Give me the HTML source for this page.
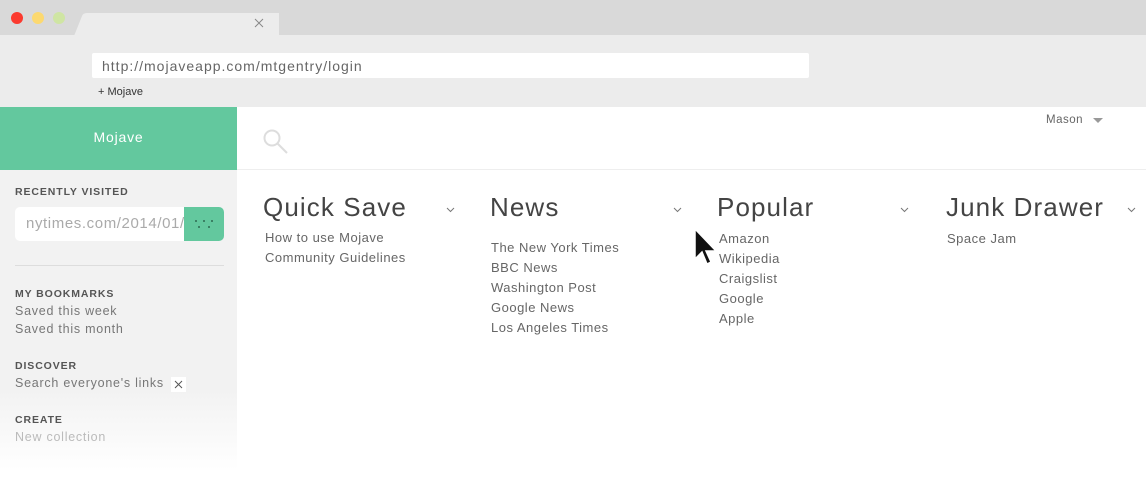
<!DOCTYPE html>
<html><head><style>
body{margin:0;width:1146px;height:484px;overflow:hidden;background:#fff;font-family:"Liberation Sans",sans-serif;position:relative}
.a{position:absolute}
.top{left:0;top:0;width:1146px;height:35px;background:#d9d9d9}
.bar{left:0;top:35px;width:1146px;height:72px;background:#ececec}
.url{left:92px;top:53px;width:717px;height:25px;background:#fff;border-radius:2px;font-size:14px;color:#666;line-height:26px;padding-left:10px;box-sizing:border-box;letter-spacing:1px}
.side{left:0;top:170px;width:237px;height:314px;background:linear-gradient(#f2f2f2 0,#f2f2f2 220px,#fff 300px)}
.green{left:0;top:107px;width:237px;height:63px;background:#63c89e;color:#fff;font-size:14px;text-align:center;line-height:60px;letter-spacing:.8px}
.h{font-size:10.5px;font-weight:bold;color:#555;letter-spacing:.9px}
.s{font-size:12.5px;color:#777;letter-spacing:.75px}
.t{font-size:26px;color:#444;letter-spacing:1.1px}
.l{font-size:13px;color:#666;line-height:20px;letter-spacing:.5px}
</style></head><body>
<div class="a top"></div>
<div class="a" style="left:11px;top:12px;width:12px;height:12px;border-radius:6px;background:#fb3a2f"></div>
<div class="a" style="left:32px;top:12px;width:12px;height:12px;border-radius:6px;background:#fcd970"></div>
<div class="a" style="left:53px;top:12px;width:12px;height:12px;border-radius:6px;background:#cfe5a3"></div>
<svg class="a" style="left:74px;top:12px" width="205" height="24"><path d="M4 24 L11 4 Q12 1 16 1 L262 1 Q266 1 267 4 L274 24 Z" transform="translate(-74 0) translate(74 0)" fill="#ececec"/></svg>
<svg class="a" style="left:74px;top:12px" width="205" height="24"><path d="M0 24 L8 4 Q9 1 13 1 L190 1 Q194 1 195 4 L203 24 Z" fill="#ececec"/></svg>
<svg class="a" style="left:254px;top:18px" width="10" height="10"><path d="M1 1 L9 9 M9 1 L1 9" stroke="#888" stroke-width="1"/></svg>
<div class="a bar"></div>
<div class="a url">http://mojaveapp.com/mtgentry/login</div>
<div class="a" style="left:98px;top:86px;font-size:11px;color:#333">+ Mojave</div>
<div class="a green">Mojave</div>
<div class="a" style="left:237px;top:169px;width:909px;height:1px;background:#eee"></div>
<svg class="a" style="left:262px;top:128px" width="28" height="28"><circle cx="10" cy="10" r="7.5" fill="none" stroke="#ddd" stroke-width="2"/><line x1="15.5" y1="15.5" x2="25" y2="25" stroke="#ddd" stroke-width="2"/></svg>
<div class="a" style="left:1046px;top:114px;font-size:11.5px;color:#666;letter-spacing:.5px">Mason</div>
<div class="a" style="left:1093px;top:118px;width:0;height:0;border-left:5px solid transparent;border-right:5px solid transparent;border-top:5px solid #999"></div>
<div class="a side"></div>
<div class="a h" style="left:15px;top:186px">RECENTLY VISITED</div>
<div class="a" style="left:15px;top:207px;width:209px;height:34px;background:#fff;border-radius:5px;overflow:hidden">
<div class="a" style="left:11px;top:8px;font-size:15px;color:#aaa;white-space:nowrap;letter-spacing:.6px">nytimes.com/2014/01/</div>
<div class="a" style="left:169px;top:0;width:40px;height:34px;background:#63c89e"></div>
<svg class="a" style="left:169px;top:0" width="40" height="34"><g fill="#2e6b52"><circle cx="12" cy="14" r="1"/><circle cx="20" cy="14" r="1"/><circle cx="28" cy="14" r="1"/><circle cx="15" cy="20" r="1"/><circle cx="25" cy="20" r="1"/></g></svg></div>
<div class="a" style="left:15px;top:265px;width:209px;height:1px;background:#ddd"></div>
<div class="a h" style="left:15px;top:288px">MY BOOKMARKS</div>
<div class="a s" style="left:15px;top:304px">Saved this week</div>
<div class="a s" style="left:15px;top:322px">Saved this month</div>
<div class="a h" style="left:15px;top:360px">DISCOVER</div>
<div class="a s" style="left:15px;top:376px">Search everyone's links</div>
<div class="a" style="left:171px;top:377px;width:15px;height:15px;background:#fff"></div>
<svg class="a" style="left:174px;top:380px" width="9" height="9"><path d="M1 1 L8 8 M8 1 L1 8" stroke="#555" stroke-width="1"/></svg>
<div class="a h" style="left:15px;top:414px">CREATE</div>
<div class="a s" style="left:15px;top:430px;color:#bbb">New collection</div>

<div class="a t" style="left:263px;top:192px">Quick Save</div>
<svg class="a" style="left:446px;top:207px" width="9" height="6"><path d="M1 1 L4.5 4.5 L8 1" fill="none" stroke="#777"/></svg>
<div class="a l" style="left:265px;top:228px">How to use Mojave<br>Community Guidelines</div>
<div class="a t" style="left:490px;top:192px">News</div>
<svg class="a" style="left:673px;top:207px" width="9" height="6"><path d="M1 1 L4.5 4.5 L8 1" fill="none" stroke="#777"/></svg>
<div class="a l" style="left:491px;top:238px">The New York Times<br>BBC News<br>Washington Post<br>Google News<br>Los Angeles Times</div>
<div class="a t" style="left:717px;top:192px">Popular</div>
<svg class="a" style="left:900px;top:207px" width="9" height="6"><path d="M1 1 L4.5 4.5 L8 1" fill="none" stroke="#777"/></svg>
<div class="a l" style="left:719px;top:229px">Amazon<br>Wikipedia<br>Craigslist<br>Google<br>Apple</div>
<div class="a t" style="left:946px;top:192px">Junk Drawer</div>
<svg class="a" style="left:1127px;top:207px" width="9" height="6"><path d="M1 1 L4.5 4.5 L8 1" fill="none" stroke="#777"/></svg>
<div class="a l" style="left:947px;top:229px">Space Jam</div>
<svg class="a" style="left:693px;top:227px" width="26" height="40"><path d="M2 2 L2 32 L9 25 L14 37 L18 35 L13 24 L23 24 Z" fill="#111" stroke="#fff" stroke-width="1.5"/></svg>
</body></html>
